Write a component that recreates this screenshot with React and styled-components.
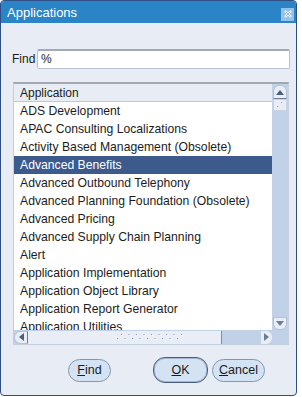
import React from "react";
import styled, { createGlobalStyle } from "styled-components";

const Global = createGlobalStyle`
  html, body { margin: 0; padding: 0; background: #ffffff; }
  body { font-family: "Liberation Sans", Arial, sans-serif; }
  * { box-sizing: border-box; }
`;

const Window = styled.div`
  width: 297px;
  height: 396px;
  border: 1px solid #2f4e85;
  border-radius: 4px 4px 4px 4px;
  background: #e8edf5;
  display: flex;
  flex-direction: column;
  overflow: hidden;
`;

const TitleBar = styled.div`
  height: 22px;
  background: #2b84c5;
  color: #ffffff;
  font-size: 13px;
  display: flex;
  align-items: center;
  justify-content: space-between;
  padding: 0 2px 0 6px;
`;

const CloseBtn = styled.div`
  width: 13px;
  height: 13px;
  background: #93c3ea;
  display: flex;
  align-items: center;
  justify-content: center;
  margin-top: 4px;
`;

const Content = styled.div`
  padding: 26px 6px 0 11px;
  display: flex;
  flex-direction: column;
`;

const FindRow = styled.div`
  display: flex;
  align-items: center;
  gap: 2px;
  height: 20px;
`;

const Label = styled.span`
  font-size: 12px;
  color: #1c1c1c;
  width: 23px;
`;

const Input = styled.div`
  flex: 1;
  height: 20px;
  background: #ffffff;
  border: 1px solid #b7c1cf;
  border-top: 2px solid #a4aab4;
  border-radius: 2px;
  font-size: 12px;
  color: #1c1c1c;
  padding: 1px 3px;
  line-height: 15px;
`;

const ListBox = styled.div`
  margin: 13px 0 0 1px;
  width: 276px;
  height: 263px;
  border: 1px solid #c5cfdc;
  border-top: 2px solid #a2a7b0;
  display: grid;
  grid-template-columns: 1fr 16px;
  grid-template-rows: 1fr 14px;
  background: #ffffff;
`;

const ListArea = styled.div`
  overflow: hidden;
  display: flex;
  flex-direction: column;
`;

const Header = styled.div`
  height: 18px;
  flex: none;
  background: #e8edf5;
  border-bottom: 1px solid #b8c9e1;
  font-size: 12px;
  color: #1c1c1c;
  padding: 1px 6px;
  line-height: 16px;
`;

const Row = styled.div`
  height: 18px;
  flex: none;
  font-size: 12.2px;
  line-height: 18px;
  padding: 0 6px;
  white-space: nowrap;
  color: ${(p) => (p.$selected ? "#ffffff" : "#1c1c1c")};
  background: ${(p) => (p.$selected ? "#3d5a8d" : "transparent")};
`;

const VScroll = styled.div`
  background: #c1d2e8;
  display: flex;
  flex-direction: column;
  align-items: center;
  padding: 1px 0 0 0;
`;

const UpBtn = styled.div`
  width: 14px;
  height: 14px;
  background: #e9eef6;
  border: 1px solid #b4c3d8;
  border-bottom: 1px solid #6d7e99;
  border-radius: 6px 6px 0 0;
  display: flex;
  align-items: center;
  justify-content: center;
`;

const VThumb = styled.div`
  width: 14px;
  height: 12px;
  background: #e9eef6;
  border: 1px solid #c8d3e2;
  display: flex;
  align-items: center;
  justify-content: center;
`;

const Spacer = styled.div`
  flex: 1;
`;

const DownBtn = styled.div`
  width: 14px;
  height: 13px;
  background: #e9eef6;
  border: 1px solid #b4c3d8;
  border-radius: 0 0 6px 6px;
  display: flex;
  align-items: center;
  justify-content: center;
`;

const HScroll = styled.div`
  background: #c1d2e8;
  display: flex;
  align-items: center;
`;

const LeftBtn = styled.div`
  width: 14px;
  height: 13px;
  background: #e9eef6;
  border: 1px solid #b4c3d8;
  border-right: 1px solid #6d7e99;
  border-radius: 6px 0 0 6px;
  display: flex;
  align-items: center;
  justify-content: center;
`;

const HThumb = styled.div`
  width: 194px;
  height: 13px;
  background: #e9eef6;
  border-right: 1px solid #7f8ea6;
  display: flex;
  align-items: center;
  justify-content: center;
`;

const RightBtn = styled.div`
  width: 11px;
  height: 13px;
  margin-left: auto;
  background: #e9eef6;
  border-radius: 0 6px 6px 0;
  display: flex;
  align-items: center;
  justify-content: center;
`;

const Corner = styled.div`
  background: #c1d2e8;
`;

const ButtonRow = styled.div`
  display: flex;
  align-items: center;
  margin-top: 12px;
  padding-left: 56px;
`;

const Button = styled.div`
  width: ${(p) => p.$w}px;
  height: ${(p) => (p.$default ? 26 : 23)}px;
  margin-left: ${(p) => p.$ml || 0}px;
  border-radius: 12px;
  background: #d3e3f4;
  border: 1px solid ${(p) => (p.$default ? "#4a5c7c" : "#8596b2")};
  box-shadow: ${(p) => (p.$default ? "inset 0 0 0 1px #a7b8d2" : "none")};
  font-size: 12.5px;
  color: #1c1c1c;
  display: flex;
  align-items: center;
  justify-content: center;
  u { text-decoration: underline; }
`;

const items = [
  "ADS Development",
  "APAC Consulting Localizations",
  "Activity Based Management (Obsolete)",
  "Advanced Benefits",
  "Advanced Outbound Telephony",
  "Advanced Planning Foundation (Obsolete)",
  "Advanced Pricing",
  "Advanced Supply Chain Planning",
  "Alert",
  "Application Implementation",
  "Application Object Library",
  "Application Report Generator",
  "Application Utilities",
];

const Grip = () => (
  <svg width="6" height="6" viewBox="0 0 6 6">
    <rect x="4" y="0" width="1" height="1" fill="#8a97ab" />
    <rect x="5" y="1" width="1" height="1" fill="#ffffff" />
    <rect x="0" y="4" width="1" height="1" fill="#8a97ab" />
    <rect x="1" y="5" width="1" height="1" fill="#ffffff" />
  </svg>
);

const HGrip = () => {
  const dots = [];
  for (let i = 0; i < 9; i++) {
    const x = i * 7.5;
    dots.push(<rect key={"a" + i} x={x + 4} y={0} width="1" height="1" fill="#8a97ab" />);
    dots.push(<rect key={"b" + i} x={x + 5} y={1} width="1" height="1" fill="#ffffff" />);
    dots.push(<rect key={"c" + i} x={x} y={4} width="1" height="1" fill="#8a97ab" />);
    dots.push(<rect key={"d" + i} x={x + 1} y={5} width="1" height="1" fill="#ffffff" />);
  }
  return (
    <svg width="68" height="6" viewBox="0 0 68 6" style={{ marginLeft: 52 }}>
      {dots}
    </svg>
  );
};

export default function App() {
  return (
    <>
      <Global />
      <Window>
        <TitleBar>
          <span>Applications</span>
          <CloseBtn>
            <svg width="10" height="10" viewBox="0 0 10 10">
              <path d="M2 2 L8 8 M8 2 L2 8" stroke="#ffffff" strokeWidth="2.2" />
              <path d="M2.5 2.5 L7.5 7.5 M7.5 2.5 L2.5 7.5" stroke="#5a8fc4" strokeWidth="0.6" />
            </svg>
          </CloseBtn>
        </TitleBar>
        <Content>
          <FindRow>
            <Label>Find</Label>
            <Input>%</Input>
          </FindRow>
          <ListBox>
            <ListArea>
              <Header>Application</Header>
              {items.map((t) => (
                <Row key={t} $selected={t === "Advanced Benefits"}>
                  {t}
                </Row>
              ))}
            </ListArea>
            <VScroll>
              <UpBtn>
                <svg width="8" height="5" viewBox="0 0 8 5">
                  <path d="M0 5 L4 0 L8 5 Z" fill="#4e5d78" />
                </svg>
              </UpBtn>
              <VThumb>
                <Grip />
              </VThumb>
              <Spacer />
              <DownBtn>
                <svg width="8" height="5" viewBox="0 0 8 5">
                  <path d="M0 0 L4 5 L8 0 Z" fill="#6d7b93" />
                </svg>
              </DownBtn>
            </VScroll>
            <HScroll>
              <LeftBtn>
                <svg width="5" height="8" viewBox="0 0 5 8">
                  <path d="M5 0 L0 4 L5 8 Z" fill="#4e5d78" />
                </svg>
              </LeftBtn>
              <HThumb>
                <HGrip />
              </HThumb>
              <RightBtn>
                <svg width="5" height="8" viewBox="0 0 5 8">
                  <path d="M0 0 L5 4 L0 8 Z" fill="#6d7b93" />
                </svg>
              </RightBtn>
            </HScroll>
            <Corner />
          </ListBox>
          <ButtonRow>
            <Button $w={43}>
              <span><u>F</u>ind</span>
            </Button>
            <Button $w={55} $ml={42} $default>
              <span><u>O</u>K</span>
            </Button>
            <Button $w={53} $ml={4}>
              <span><u>C</u>ancel</span>
            </Button>
          </ButtonRow>
        </Content>
      </Window>
    </>
  );
}
